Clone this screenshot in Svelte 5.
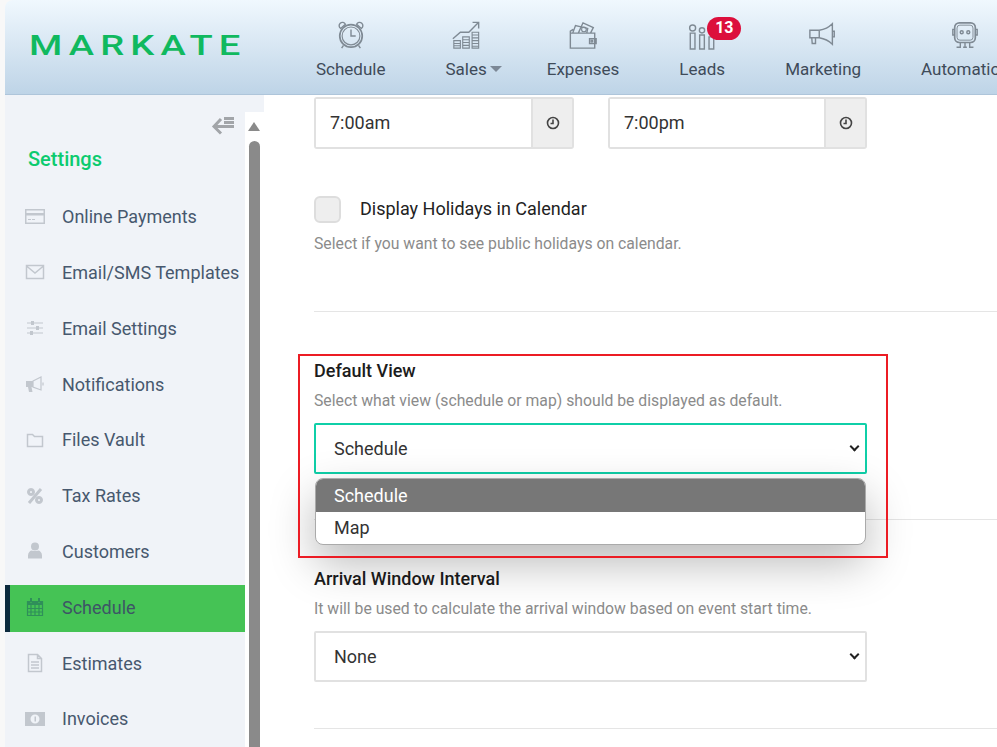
<script>
  const nav = [
    { label: 'Schedule', icon: 'clock' },
    { label: 'Sales', icon: 'sales', caret: true },
    { label: 'Expenses', icon: 'wallet' },
    { label: 'Leads', icon: 'leads', badge: 13 },
    { label: 'Marketing', icon: 'horn' },
    { label: 'Automation', icon: 'robot' }
  ];

  const menu = [
    { label: 'Online Payments', f: 'M0 2h20v15H0zM1.5 3.5V6h17V3.5zM1.5 8.5v7h17v-7zM3 12h3v1H3zM7 12h3v1H7z' },
    { label: 'Email/SMS Templates', sw: 1.5, s: 'M1.500 3.500h17v13h-17zM1.500 4l8.500 7 8.500-7' },
    { label: 'Email Settings', s: 'M2 5h16M2 10h16M2 15h16', f: 'M6 3h3v4H6zM11 8h3v4h-3zM5 13h3v4H5z' },
    { label: 'Notifications', f: 'M1 7h7v6H6.500l1 5H4l-1-5H1z', s: 'M8 7l8-4v13l-8-3zM18 8.500v3' },
    { label: 'Files Vault', sw: 1.5, s: 'M2.500 4.500h5l2 2h8v10h-15z' },
    { label: 'Tax Rates', sw: 3, s: 'M16 3L4 17M6 3.500a2.500 2.500 0 1 0 .01 0zM14 11.500a2.500 2.500 0 1 0 .01 0z' },
    { label: 'Customers', f: 'M10 1.500a4 4 0 1 1 0 8 4 4 0 0 1 0-8zM3 17.500v-3c0-3 2-5 4-5 1 .8 5 .8 6 0 2 0 4 2 4 5v3z' },
    { label: 'Schedule', active: true, s: 'M2.500 4.500h15v14h-15zM2.500 11.500h15M2.500 15h15M6 8v10.500M10 8v10.500M14 8v10.500', f: 'M2.500 4.500h15V8h-15zM5 1h2v4.500H5zM13 1h2v4.500h-2z' },
    { label: 'Estimates', sw: 1.5, s: 'M3.500 1.500h9l4 4v13h-13zM12.500 1.500v4h4M6 9h8M6 12h8M6 15h8' },
    { label: 'Invoices', f: 'M0 3h20v14H0zM10 5.500a4.500 4.500 0 1 0 0 9 4.500 4.500 0 0 0 0-9zM9.500 7.500h1.500v5H9.500z' }
  ];
</script>

<div class="page">
  <header class="top">
    <div class="logo"><span>MARKATE</span></div>
    <nav class="mainnav">
      {#each nav as n}
        <div class="navitem">
          <svg class="navicon" viewBox="0 0 32 32" fill="none" stroke="currentColor" stroke-width="1.500">
            {#if n.icon === 'clock'}
              <circle cx="16" cy="17" r="12" stroke-width="1.800" />
              <circle cx="16" cy="17" r="9.500" stroke-width="1.200" />
              <path d="M5 9a3.500 3.500 0 1 1 5-4.500zM27 9a3.500 3.500 0 1 0-5-4.500zM8 27l-2 3M24 27l2 3M16 10v7h5" />
            {:else if n.icon === 'sales'}
              <path d="M2 20l8-7h9l10-10M23 2.500h6.500V9" />
              <path d="M3 22h7v8H3zM3 25h7M3 27.500h7M12.500 18h7v12h-7zM12.500 21h7M12.500 24h7M12.500 27h7M22.500 13h7v17h-7zM22.500 16h7M22.500 19h7M22.500 22h7M22.500 25h7M22.500 28h7" stroke-width="1.200" />
            {:else if n.icon === 'wallet'}
              <path d="M2.500 14h26v16h-26zM2.500 14v-2l3-2M23 20h7v5h-7zM5 14l3-8 13 3-1 5M11 14l5-11 11 5-3 6" />
              <circle cx="25.500" cy="22.500" r="1" />
              <circle cx="17" cy="10" r="2.500" stroke-width="1.200" />
            {:else if n.icon === 'leads'}
              <circle cx="6" cy="8.500" r="3.200" />
              <circle cx="16" cy="11" r="2.800" />
              <path d="M3.500 14h5v17h-5zM13.500 16h5v15h-5zM23.500 18h5v13h-5z" />
            {:else if n.icon === 'horn'}
              <path d="M2 11h10v8H2zM4 19h4v6H4.500zM12 11c6-1 11-4 14-7v22c-3-3-8-6-14-7M26 12h2v6h-2z" />
            {:else}
              <rect x="5" y="3" width="22" height="21" rx="5" stroke-width="1.800" />
              <rect x="7.500" y="5.500" width="17" height="16" rx="3" stroke-width="1" />
              <circle cx="12.500" cy="13" r="1.600" />
              <circle cx="19.500" cy="13" r="1.600" />
              <path d="M5 10H3v6h2M27 10h2v6h-2M11 24v5H7M16 24v5M21 24v5h4M14 29h4" />
            {/if}
          </svg>
          <span class="navlabel">{n.label}</span>
          {#if n.caret}<i class="caret"></i>{/if}
          {#if n.badge}<b class="badge">{n.badge}</b>{/if}
        </div>
      {/each}
    </nav>
  </header>

  <div class="main">
    <aside class="side">
      <div class="sidegap"></div>
      <div class="siderow">
        <div class="sidelist">
          <div class="collapse">
            <svg viewBox="0 0 24 20" width="24" height="20" fill="none" stroke="currentColor" stroke-width="3">
              <path d="M10 3L3 10.500l7 7M3 10.500h20M13 2.500h10M13 6.500h10" />
            </svg>
          </div>
          <h2 class="settings">Settings</h2>
          <ul class="menu">
            {#each menu as m}
              <li class:active={m.active}>
                <svg viewBox="0 0 20 20" width="20" height="20">
                  {#if m.f}<path d={m.f} fill="currentColor" fill-rule="evenodd" />{/if}
                  {#if m.s}<path d={m.s} fill="none" stroke="currentColor" stroke-width={m.sw ?? 1.200} />{/if}
                </svg>
                <span>{m.label}</span>
              </li>
            {/each}
          </ul>
        </div>
        <div class="scroll">
          <i class="arrow"></i>
          <i class="thumb"></i>
        </div>
      </div>
    </aside>

    <section class="content">
      <div class="block first">
        <div class="times">
          <div class="time">
            <input value="7:00am" />
            <span class="addon">
              <svg viewBox="0 0 14 14" width="14" height="14" fill="none" stroke="currentColor" stroke-width="1.600">
                <circle cx="7" cy="7" r="5.500" /><path d="M7 3.500V7.500H4.500" />
              </svg>
            </span>
          </div>
          <div class="time">
            <input value="7:00pm" />
            <span class="addon">
              <svg viewBox="0 0 14 14" width="14" height="14" fill="none" stroke="currentColor" stroke-width="1.600">
                <circle cx="7" cy="7" r="5.500" /><path d="M7 3.500V7.500H4.500" />
              </svg>
            </span>
          </div>
        </div>
        <label class="check">
          <span class="box"></span>
          <span class="checktext">Display Holidays in Calendar</span>
        </label>
        <p class="help holiday">Select if you want to see public holidays on calendar.</p>
      </div>

      <div class="block">
        <div class="annot"></div>
        <h3>Default View</h3>
        <p class="help">Select what view (schedule or map) should be displayed as default.</p>
        <div class="selectwrap">
          <select class="focus"><option>Schedule</option><option>Map</option></select>
          <div class="popup">
            <div class="opt selected">Schedule</div>
            <div class="opt">Map</div>
          </div>
        </div>
      </div>

      <div class="block last">
        <h3>Arrival Window Interval</h3>
        <p class="help">It will be used to calculate the arrival window based on event start time.</p>
        <div class="selectwrap">
          <select><option>None</option></select>
        </div>
      </div>
    </section>
  </div>
</div>

<style>
  :global(body) { margin: 0; background: #fff; }
  .page {
    height: 747px;
    width: 997px;
    overflow: hidden;
    padding-left: 5px;
    box-sizing: border-box;
    background: #f8f8f8;
    font-family: Roboto, "Liberation Sans", sans-serif;
    display: flex;
    flex-direction: column;
  }
  .top {
    height: 95px;
    flex: none;
    display: flex;
    border-top-left-radius: 8px;
    background: linear-gradient(#f0f8fe, #bed4e7);
    border-bottom: 1px solid #aec5da;
    box-sizing: border-box;
  }
  .logo {
    width: 311px;
    flex: none;
    padding: 28px 0 0 24px;
    box-sizing: border-box;
    color: #10b95f;
    font-size: 28px;
    line-height: 36px;
    font-weight: 500;
  }
  .logo span {
    display: inline-block;
    letter-spacing: 4.500px;
    transform: scaleX(1.360);
    transform-origin: left;
  }
  .mainnav { display: flex; gap: 60px; }
  .navitem {
    position: relative;
    display: flex;
    flex-direction: column;
    align-items: center;
    padding-top: 20px;
    color: #7f8a94;
  }
  .navicon { width: 30px; height: 30px; flex: none; }
  .navlabel {
    margin-top: 8.500px;
    font-size: 17px;
    line-height: 20px;
    color: #3f4b59;
    white-space: nowrap;
  }
  .caret {
    position: absolute;
    right: -15px;
    top: 66px;
    border: 6px solid transparent;
    border-top-color: #7c8896;
    border-bottom: 0;
  }
  .badge {
    position: absolute;
    left: 28px;
    top: 17px;
    width: 34px;
    height: 23px;
    border-radius: 12px;
    background: #dc0f3c;
    color: #fff;
    font-size: 16px;
    line-height: 22px;
    font-weight: 700;
    text-align: center;
  }

  .main { flex: 1; display: flex; min-height: 0; background: #fff; }
  .side { width: 259px; flex: none; display: flex; flex-direction: column; background: #f0f3f8; }
  .sidegap { height: 17px; flex: none; }
  .siderow { flex: 1; display: flex; min-height: 0; }
  .sidelist { width: 240px; flex: none; }
  .collapse { display: flex; justify-content: flex-end; padding: 4px 10px 0 0; height: 20px; color: #a2a5a9; }
  .settings {
    margin: 11px 0 0 23px;
    font-size: 20px;
    line-height: 24px;
    font-weight: 500;
    color: #0ccb6f;
  }
  .menu { list-style: none; margin: 22.200px 0 0; padding: 0; display: flex; flex-direction: column; gap: 8.800px; }
  .menu li {
    height: 47px;
    display: flex;
    align-items: center;
    gap: 17px;
    padding-left: 20px;
    box-sizing: border-box;
    color: #c2c7ce;
  }
  .menu li span { font-size: 18px; color: #47586e; white-space: nowrap; }
  .menu li.active {
    background: #45c355;
    border-left: 5px solid #0b2a3d;
    padding-left: 15px;
    padding-bottom: 2px;
    margin: 1px 0 -1px;
    color: #2f8f5a;
  }
  .menu li.active span { color: #3d5566; }
  .scroll { flex: 1; background: #fff; position: relative; }
  .arrow {
    position: absolute;
    left: 3px;
    top: 10px;
    border: 6.500px solid transparent;
    border-bottom: 9px solid #8a8a8a;
    border-top: 0;
  }
  .thumb {
    position: absolute;
    left: 4px;
    top: 29px;
    width: 11px;
    bottom: 0;
    border-radius: 6px 6px 0 0;
    background: #8a8a8a;
  }

  .content { flex: 1; min-width: 0; padding-left: 50px; }
  .block {
    position: relative;
    padding: 48px 0 45px;
    border-bottom: 1px solid #e5e5e5;
  }
  .block.first { padding-top: 2px; padding-bottom: 56px; }
  .block.last { padding-bottom: 46px; }
  .times { display: flex; gap: 34px; }
  .time {
    width: 260px;
    height: 52px;
    display: flex;
    box-sizing: border-box;
    border: 2px solid #e1e1e1;
    border-radius: 3px;
  }
  .time:last-child { width: 259px; }
  .time input {
    flex: 1;
    min-width: 0;
    border: 0;
    padding: 0 0 2px 14px;
    font: 18px Roboto, sans-serif;
    color: #333;
    outline: none;
    background: #fff;
  }
  .addon {
    width: 41px;
    box-sizing: border-box;
    flex: none;
    display: flex;
    align-items: center;
    justify-content: center;
    background: #eee;
    border-left: 2px solid #e1e1e1;
    color: #444;
  }
  .check {
    display: flex;
    align-items: center;
    gap: 19px;
    height: 27px;
    margin-top: 47px;
    font-size: 18px;
    line-height: 24px;
    color: #222;
  }
  .checktext { padding-bottom: 2px; }
  .box {
    width: 27px;
    height: 27px;
    box-sizing: border-box;
    background: #eee;
    border: 2px solid #ddd;
    border-radius: 6px;
  }
  .help {
    margin: 8px 0 0;
    font-size: 15.750px;
    line-height: 22px;
    color: #8b8b8b;
  }
  .help.holiday { margin-top: 10px; }
  h3 {
    margin: 0;
    font-size: 18px;
    line-height: 22px;
    font-weight: 500;
    color: #1c1c1c;
  }
  .selectwrap { position: relative; width: 553px; margin-top: 11px; }
  .selectwrap::after {
    content: "";
    position: absolute;
    right: 9px;
    top: 20px;
    width: 5px;
    height: 5px;
    border-right: 2px solid #222;
    border-bottom: 2px solid #222;
    transform: rotate(45deg);
    pointer-events: none;
  }
  select {
    display: block;
    appearance: none;
    width: 100%;
    height: 51px;
    box-sizing: border-box;
    border: 2px solid #e1e1e1;
    border-radius: 2px;
    background: #fff;
    padding: 0 2px 1px 18px;
    font: 18px Roboto, sans-serif;
    color: #333;
    outline: none;
  }
  select.focus { border-color: #0fcfa8; }
  .popup {
    position: absolute;
    z-index: 2;
    left: 1px;
    top: 55px;
    width: 551px;
    height: 67px;
    box-sizing: border-box;
    border: 1px solid #aaa;
    border-radius: 8px;
    background: #fff;
    overflow: hidden;
    box-shadow: 0 18px 45px rgba(0, 0, 0, 0.28);
  }
  .opt {
    height: 32px;
    line-height: 32px;
    padding-left: 18px;
    font-size: 18px;
    color: #333;
  }
  .opt.selected { height: 33px; line-height: 34px; background: #777; color: #fff; }
  .annot {
    position: absolute;
    z-index: 3;
    left: -16px;
    top: 42px;
    width: 590px;
    height: 204px;
    box-sizing: border-box;
    border: 2px solid #ec1c24;
    pointer-events: none;
  }
</style>
